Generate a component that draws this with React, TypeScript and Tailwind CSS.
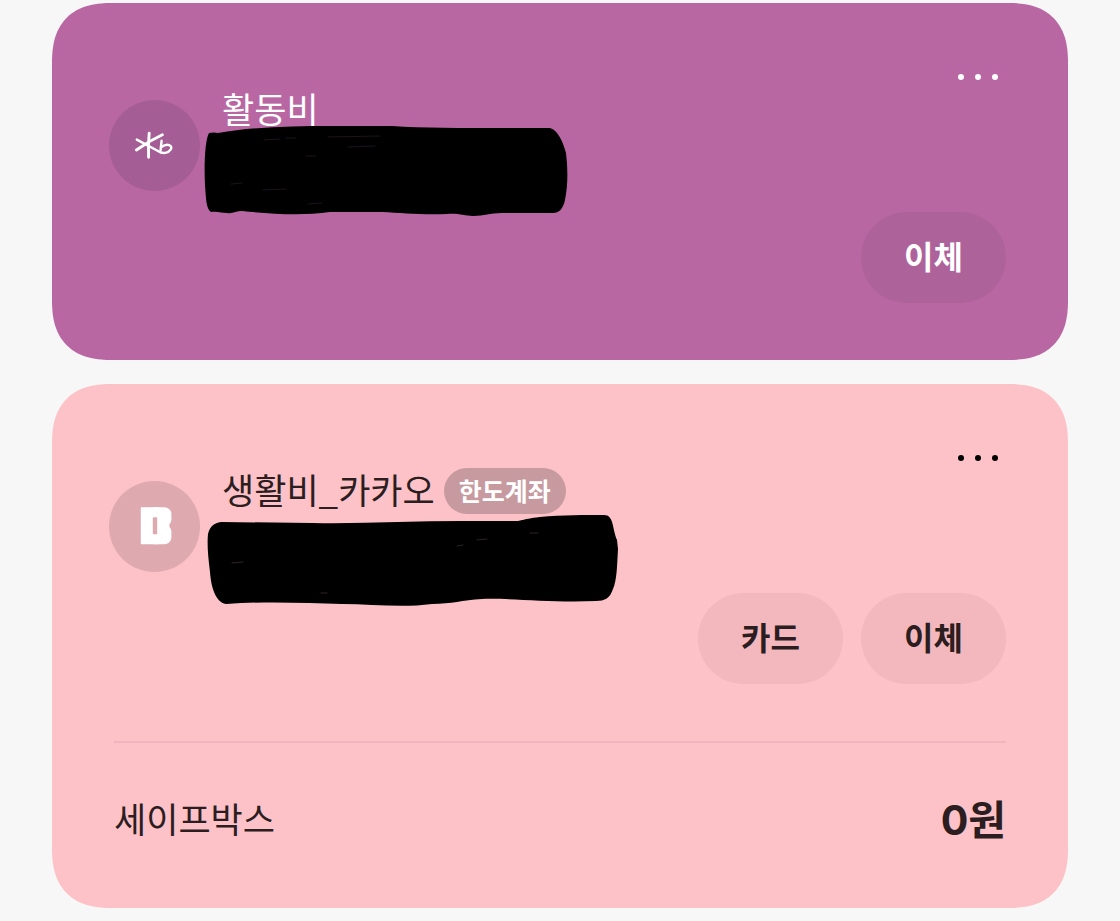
import React from 'react'
import { clsx } from 'clsx'

type Tone = 'purple' | 'pink'

interface AccountCardProps {
  tone: Tone
  name: string
  badge?: string
  logo: React.ReactNode
  mask: React.ReactNode
  actions: string[]
  children?: React.ReactNode
}

const toneClasses = {
  purple: {
    card: 'bg-[#b967a3] text-white',
    avatar: 'bg-[#a55e95]',
    action: 'bg-[#ae629a]',
    dots: 'text-white',
  },
  pink: {
    card: 'bg-[#fdc2c8] text-[#2b1d20]',
    avatar: 'bg-[#dfa9b0]',
    action: 'bg-[#f3b7be]',
    dots: 'text-black',
  },
}

function StarLogo() {
  return (
    <svg viewBox="0 0 91 91" className="size-full" fill="none" stroke="white" strokeWidth="2.9" strokeLinecap="round" strokeLinejoin="round" aria-hidden="true">
      <path d="M40.2 33.2 Q39 45 39.6 57.2" />
      <path d="M53.4 34.8 Q40 41 27.4 50" />
      <path d="M27.8 39.6 L49 51 C54 54.6 59.5 53 61.8 49.4 C64 45.4 58.5 42.6 52.4 47" strokeWidth="2.4" />
      <path d="M52.6 40.6 L51.6 50" strokeWidth="2.4" />
    </svg>
  )
}

function BankLogo() {
  return (
    <svg viewBox="0 0 91 91" className="size-full" aria-hidden="true">
      <g fill="white">
        <rect x="31.8" y="26.2" width="18" height="37" rx="0.6" />
        <rect x="38" y="26.2" width="24.4" height="19.2" rx="7" />
        <rect x="38" y="43.6" width="24.4" height="19.6" rx="7" />
        <rect x="38" y="34" width="22.4" height="20" />
      </g>
      <rect x="43.8" y="36.2" width="4.4" height="17" rx="0.8" fill="#dfa9b0" />
    </svg>
  )
}

function PurpleMask() {
  return (
    <svg width="370" height="100" viewBox="0 0 370 100" aria-hidden="true">
      <path d="M7 8 Q12 7 16 8 C50 2 90 1 130 1 L190 1 C220 3 260 3 300 3 L348 3 C356 5 361 17 364 28 C366 44 366 60 363 75 C361 84 357 88 351 88 L300 88 C287 88 283 91 271 91 C262 91 257 88 245 89 C220 90 200 88 180 87 L128 87 C100 91 70 89 40 86 C34 86 31 89 25 88 C19 88 16 86 9 87 C4 84 4 73 3 60 C2 40 3 15 7 8 Z" fill="black" />
      <g stroke="#2c1a28" strokeWidth="0.7" strokeLinecap="round">
        <path d="M62 15 L78 14 M84 13 L94 13 M126 12 L178 11 M104 31 L114 31 M146 22 L173 21 M29 59 L40 58 M61 65 L84 64 M106 79 L120 78" />
      </g>
    </svg>
  )
}

function PinkMask() {
  return (
    <svg width="420" height="102" viewBox="0 0 420 102" aria-hidden="true">
      <path d="M6 28 C8 20 12 17 19 16 L110 17 C160 18 210 15 260 15 L316 15 C325 13 328 12 338 11 C360 9 385 9 402 9 C412 9 410 22 415 34 L416 43 C415 60 415 74 411 83 C408 92 403 95 394 95 C350 97 310 92 280 93 C260 94 250 98 230 98 C200 102 170 98 140 98 C105 97 65 95 24 98 C13 96 9 80 8 66 C6 50 5 38 6 28 Z" fill="black" />
      <g stroke="#443236" strokeWidth="0.7" strokeLinecap="round">
        <path d="M275 34 L285 33 M328 27 L336 27 M255 40 L261 39 M30 57 L41 56 M119 87 L125 87" />
      </g>
    </svg>
  )
}

function MoreButton({ className }: { className?: string }) {
  return (
    <button type="button" aria-label="더보기" className={clsx('flex h-12 items-center gap-[11px] pr-2', className)}>
      {[0, 1, 2].map((index) => (
        <span key={index} className="size-1.5 rounded-full bg-current" />
      ))}
    </button>
  )
}

function AccountCard({ tone, name, badge, logo, mask, actions, children }: AccountCardProps) {
  const classes = toneClasses[tone]

  return (
    <section className={clsx('rounded-[60px] px-[62px] pt-[50px] pb-[57px] [corner-shape:superellipse(1.3)]', classes.card)}>
      <div className="flex justify-between">
        <div className="-ml-[5px] flex items-start gap-[22px] pt-[34px]">
          <div className={clsx('mt-[13px] size-[91px] shrink-0 rounded-full', classes.avatar)}>{logo}</div>
          <div>
            <div className="flex h-[46px] items-center gap-[9px]">
              <h2 className="pb-1 text-[35px] leading-[42px] whitespace-nowrap">{name}</h2>
              {badge && (
                <span className="rounded-full bg-[#c69a9f] px-[15px] pb-0.5 text-[25px] leading-[44px] font-bold whitespace-nowrap text-white">
                  {badge}
                </span>
              )}
            </div>
            <div className="relative -mt-2 -ml-5">{mask}</div>
          </div>
        </div>

        <div className="flex h-[250px] flex-col items-end justify-between">
          <MoreButton className={classes.dots} />
          <div className="flex gap-[18px]">
            {actions.map((label) => (
              <button
                key={label}
                type="button"
                className={clsx('h-[91px] w-[145px] rounded-[46px] pb-1.5 text-[32px] font-bold', classes.action)}
              >
                {label}
              </button>
            ))}
          </div>
        </div>
      </div>
      {children}
    </section>
  )
}

export default function App() {
  return (
    <main
      lang="ko"
      className="flex min-h-screen flex-col gap-6 bg-[#f7f7f7] px-[52px] pt-[3px] pb-3 font-['Noto_Sans_CJK_KR',sans-serif]"
    >
      <AccountCard tone="purple" name="활동비" logo={<StarLogo />} mask={<PurpleMask />} actions={['이체']} />

      <AccountCard
        tone="pink"
        name="생활비_카카오"
        badge="한도계좌"
        logo={<BankLogo />}
        mask={<PinkMask />}
        actions={['카드', '이체']}
      >
        <div className="mt-[57px] flex items-start justify-between border-t-2 border-[#efb4bc] pt-[47px] pb-[1px]">
          <span className="text-[35px] leading-[56px]">세이프박스</span>
          <strong className="font-[Inter,'Noto_Sans_CJK_KR',sans-serif] text-[41px] leading-[60px] font-bold">0원</strong>
        </div>
      </AccountCard>
    </main>
  )
}
